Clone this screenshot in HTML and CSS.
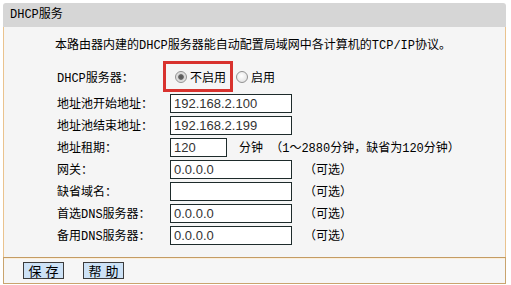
FILE: index.html
```html
<!DOCTYPE html>
<html lang="zh-CN">
<head>
    <meta charset="UTF-8">
    <title>DHCP服务</title>
    <link rel="stylesheet" href="styles.css">
</head>
<body>
    <div class="panel">
        <div class="panel-head">DHCP服务</div>

        <div class="panel-body">
            <p class="intro">本路由器内建的DHCP服务器能自动配置局域网中各计算机的TCP/IP协议。</p>

            <div class="form">
                <div class="row row-first">
                    <span class="label">DHCP服务器：</span>
                    <div class="radio-group">
                        <label class="radio-box">
                            <input type="radio" name="dhcp" checked> 不启用
                        </label>
                        <label class="radio-plain">
                            <input type="radio" name="dhcp"> 启用
                        </label>
                    </div>
                </div>
                <div class="row">
                    <span class="label">地址池开始地址：</span>
                    <input class="field" type="text" value="192.168.2.100">
                </div>
                <div class="row">
                    <span class="label">地址池结束地址：</span>
                    <input class="field" type="text" value="192.168.2.199">
                </div>
                <div class="row">
                    <span class="label">地址租期：</span>
                    <input class="field field-short" type="text" value="120">
                    <span class="note">分钟 （1～2880分钟，缺省为120分钟）</span>
                </div>
                <div class="row">
                    <span class="label">网关：</span>
                    <input class="field" type="text" value="0.0.0.0">
                    <span class="note">（可选）</span>
                </div>
                <div class="row">
                    <span class="label">缺省域名：</span>
                    <input class="field" type="text" value="">
                    <span class="note">（可选）</span>
                </div>
                <div class="row">
                    <span class="label">首选DNS服务器：</span>
                    <input class="field" type="text" value="0.0.0.0">
                    <span class="note">（可选）</span>
                </div>
                <div class="row">
                    <span class="label">备用DNS服务器：</span>
                    <input class="field" type="text" value="0.0.0.0">
                    <span class="note">（可选）</span>
                </div>
            </div>
        </div>

        <div class="panel-foot">
            <button class="btn">保存</button>
            <button class="btn">帮助</button>
        </div>
    </div>
</body>
</html>
```

FILE: styles.css
```css
body {
    margin: 0;
    padding: 3px;
    background: #fff;
    font-family: "Liberation Mono", "Noto Sans CJK SC", monospace;
    font-size: 12px;
    color: #000;
}
.panel {
    width: 503px;
}
.panel-head {
    height: 24px;
    line-height: 24px;
    padding-left: 7px;
    background: #d6d6d6;
    border-radius: 3px 3px 0 0;
}
.panel-body {
    background: #f5f5f5;
    border-left: 1px solid #eac38e;
    border-right: 1px solid #eac38e;
    padding: 10px 0 11px 0;
}
.intro {
    margin: 0 0 6px 51px;
    line-height: 18px;
}
.form {
    padding-left: 53px;
}
.row {
    display: flex;
    align-items: center;
    height: 22px;
}
.row-first {
    height: 31px;
}
.label {
    width: 113px;
    flex-shrink: 0;
}
.radio-group {
    display: flex;
    align-items: center;
    margin-left: -7px;
}
.radio-box {
    display: flex;
    align-items: center;
    height: 25px;
    padding: 0 4px 0 9px;
    border: 3px solid #d8322e;
}
.radio-plain {
    display: flex;
    align-items: center;
    margin-left: 3px;
}
.radio-box input,
.radio-plain input {
    appearance: none;
    -webkit-appearance: none;
    width: 12px;
    height: 12px;
    margin: 0 3px 0 0;
    border: 1px solid #929292;
    border-radius: 50%;
    background: radial-gradient(circle at 45% 40%, #fff 0, #e6e6e6 70%, #d0d0d0 100%);
}
.radio-box input:checked,
.radio-plain input:checked {
    background: radial-gradient(circle, #555 0, #666 2.4px, #d6d6d6 3.2px, #f2f2f2 100%);
}
.field {
    box-sizing: border-box;
    width: 122px;
    height: 19px;
    margin: 0;
    padding: 0 3px;
    border: 1px solid #1e2b2b;
    background: #fff;
    font-family: "Liberation Sans", Arial, sans-serif;
    font-size: 13px;
    color: #333;
    outline: none;
}
.field-short {
    width: 57px;
}
.note {
    margin-left: 12px;
    white-space: pre;
}
.panel-foot {
    display: flex;
    gap: 19px;
    box-sizing: border-box;
    height: 27px;
    padding: 4px 0 0 19px;
    background: #f6f6f6;
    border: 1px solid #c9a46e;
    border-top-color: #c49c63;
    box-shadow: inset 0 1px 0 #fbeedb;
}
.btn {
    height: 17px;
    width: 41px;
    margin: 0;
    padding: 0 0 0 4px;
    border: 1px solid #3c3c3c;
    background: #cde2f6;
    font-family: "Noto Sans CJK SC", sans-serif;
    font-size: 13px;
    line-height: 15px;
    letter-spacing: 4px;
    color: #000;
}
```
